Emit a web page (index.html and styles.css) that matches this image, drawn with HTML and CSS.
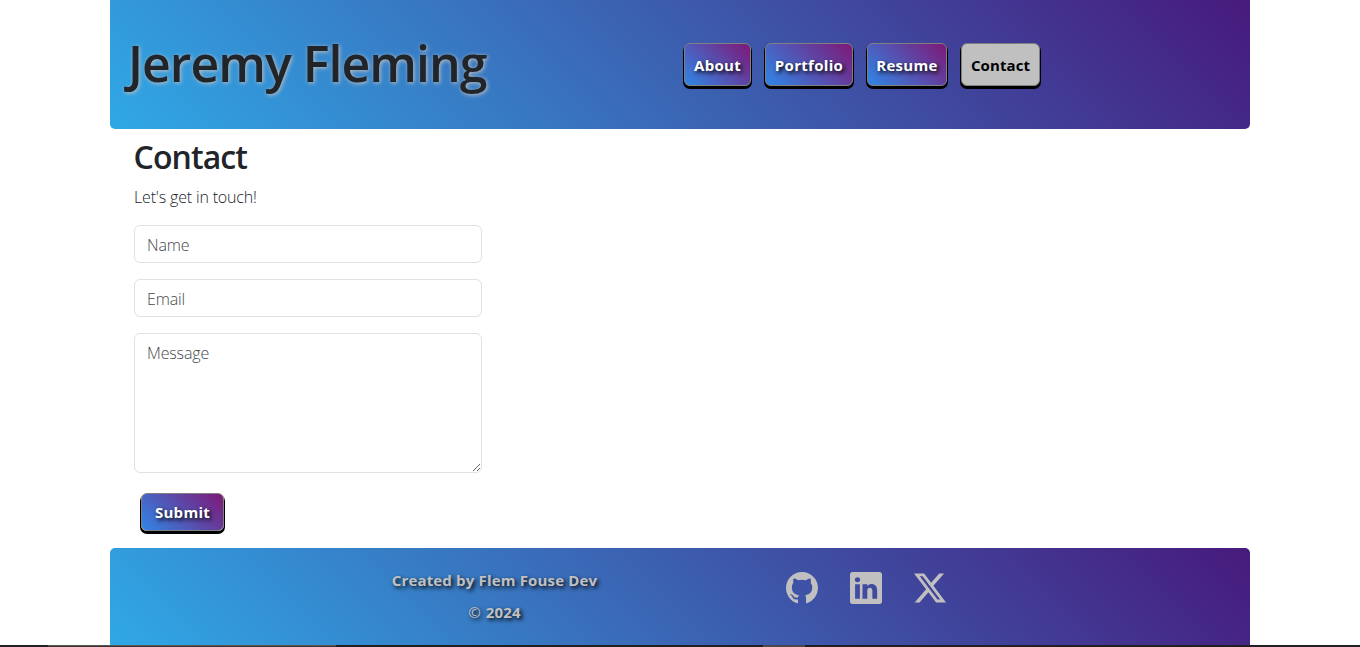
FILE: index.html
```html
<!DOCTYPE html>
<html lang="en">
<head>
<meta charset="utf-8">
<title>Jeremy Fleming</title>
<link rel="stylesheet" href="styles.css">
</head>
<body>
<div class="page">
  <header class="header">
    <h1 class="brand">Jeremy Fleming</h1>
    <nav class="nav">
      <a class="btn about">About</a>
      <a class="btn portfolio">Portfolio</a>
      <a class="btn resume">Resume</a>
      <a class="btn contact active">Contact</a>
    </nav>
  </header>
  <main class="main">
    <h2 class="title">Contact</h2>
    <p class="lead">Let's get in touch!</p>
    <form class="form">
      <input class="field" type="text" placeholder="Name">
      <input class="field" type="email" placeholder="Email">
      <textarea class="field message" placeholder="Message"></textarea>
      <button class="btn submit" type="button">Submit</button>
    </form>
  </main>
  <footer class="footer">
    <div class="credit">
      <p class="credit-name">Created by Flem Fouse Dev</p>
      <p class="credit-year"><span class="copy">©</span> 2024</p>
    </div>
    <div class="social">
      <svg class="icon" viewBox="0 0 16 16"><path d="M8 0C3.58 0 0 3.58 0 8c0 3.54 2.29 6.53 5.47 7.59.4.07.55-.17.55-.38 0-.19-.01-.82-.01-1.49-2.01.37-2.53-.49-2.69-.94-.09-.23-.48-.94-.82-1.13-.28-.15-.68-.52-.01-.53.63-.01 1.08.58 1.23.82.72 1.21 1.87.87 2.33.66.07-.52.28-.87.51-1.07-1.78-.2-3.64-.89-3.64-3.95 0-.87.31-1.59.82-2.15-.08-.2-.36-1.02.08-2.12 0 0 .67-.21 2.2.82.64-.18 1.32-.27 2-.27s1.36.09 2 .27c1.53-1.04 2.2-.82 2.2-.82.44 1.1.16 1.92.08 2.12.51.56.82 1.27.82 2.15 0 3.07-1.87 3.75-3.65 3.95.29.25.54.73.54 1.48 0 1.07-.01 1.93-.01 2.2 0 .21.15.46.55.38A8.01 8.01 0 0 0 16 8c0-4.42-3.58-8-8-8"/></svg>
      <svg class="icon" viewBox="0 0 16 16"><path d="M0 1.146C0 .513.526 0 1.175 0h13.65C15.474 0 16 .513 16 1.146v13.708c0 .633-.526 1.146-1.175 1.146H1.175C.526 16 0 15.487 0 14.854zm4.943 12.248V6.169H2.542v7.225zm-1.2-8.212c.837 0 1.358-.554 1.358-1.248-.015-.709-.52-1.248-1.342-1.248S2.4 3.226 2.4 3.934c0 .694.521 1.248 1.327 1.248zm4.908 8.212V9.359c0-.216.016-.432.08-.586.173-.431.568-.878 1.232-.878.869 0 1.216.662 1.216 1.634v3.865h2.401V9.25c0-2.22-1.184-3.252-2.764-3.252-1.274 0-1.845.7-2.165 1.193v.025h-.016l.016-.025V6.169h-2.4c.03.678 0 7.225 0 7.225z"/></svg>
      <svg class="icon" viewBox="0 0 16 16"><path d="M12.6.75h2.454l-5.36 6.142L16 15.25h-4.937l-3.867-5.07-4.425 5.07H.316l5.733-6.57L0 .75h5.063l3.495 4.633L12.601.75Zm-.86 13.028h1.36L4.323 2.145H2.865z"/></svg>
    </div>
  </footer>
</div>
<div class="taskbar"><span class="task task-search"></span><span class="task task-app"></span></div>
</body>
</html>
```
FILE: styles.css
```css
* { box-sizing: border-box; }
body {
  margin: 0;
  height: 647px;
  overflow: hidden;
  background: #fff;
  color: #212529;
  font-family: "Open Sans", "Noto Sans", sans-serif;
  font-size: 16px;
}
h1, h2, p { margin: 0; }
.page { width: 1140px; height: 645px; margin: 0 auto; display: flex; flex-direction: column; }
.header, .footer { background: linear-gradient(45deg, #30a8e6, #471a7c); flex: none; }
.header { height: 129px; display: flex; align-items: flex-start; border-radius: 0 0 5px 5px; }
.brand {
  width: 574px;
  padding: 28px 0 0 18px;
  font-size: 50px;
  line-height: 70px;
  font-weight: 600;
  letter-spacing: -.97px;
  white-space: nowrap;
  text-shadow: 1px 1px 4px #c0c0c0;
}
.nav { display: flex; gap: 14px; padding-top: 43px; }
.btn {
  display: flex;
  align-items: center;
  justify-content: center;
  height: 43px;
  padding: 1px 0 0;
  border: 1px solid #808080;
  border-radius: 6px;
  background: linear-gradient(45deg, #2f86e6, #7f1877);
  box-shadow: 0 2px 0 1px #000;
  color: #fff;
  font-family: inherit;
  font-size: 15px;
  font-weight: 700;
  letter-spacing: .3px;
  text-shadow: 2px 2px 4px #000;
}
.about { width: 67px; }
.portfolio { width: 88px; }
.resume { width: 80px; }
.contact { width: 79px; }
.active { background: #c0c0c0; color: #000; text-shadow: none; letter-spacing: .1px; }
.main { height: 419px; padding: 9px 24px 0; flex: none; }
.title { font-size: 32px; line-height: 38px; font-weight: 600; letter-spacing: -.9px; text-indent: -.5px; }
.lead { margin-top: 9px; line-height: 24px; font-weight: 300; letter-spacing: -.17px; }
.form { width: 348px; margin-top: 16px; display: flex; flex-direction: column; gap: 16px; }
.field {
  display: block;
  width: 100%;
  height: 38px;
  padding: 7px 12px 5px;
  border: 1px solid #dee2e6;
  border-radius: 6px;
  background: #fff;
  font: 300 16px/24px "Open Sans", "Noto Sans", sans-serif;
  letter-spacing: -.15px;
}
.field::placeholder { color: #45494d; opacity: 1; }
.message { height: 140px; resize: vertical; }
.submit { width: 83px; height: 38px; padding-top: 0; margin: 4px 0 0 7px; }
.footer { height: 97px; display: flex; border-radius: 5px 5px 0 0; }
.credit {
  width: 769px;
  padding-top: 16px;
  text-align: center;
  line-height: 32px;
  font-size: 15px;
  font-weight: 700;
  letter-spacing: .17px;
  color: #c0c0c0;
  text-shadow: 2px 2px 4px #000;
}
.copy { font-weight: 400; margin-right: 1px; }
.social { display: flex; gap: 32px; margin-left: -93px; padding-top: 24px; }
.icon { width: 32px; height: 32px; fill: #c0c0c0; }
.taskbar { display: flex; height: 2px; background: #201f24; }
.task { height: 2px; }
.task-search { width: 288px; margin-left: 48px; background: #373535; border-top: 1px solid #5b5757; }
.task-app { width: 42px; margin-left: 427px; background: #4a484c; }
```
